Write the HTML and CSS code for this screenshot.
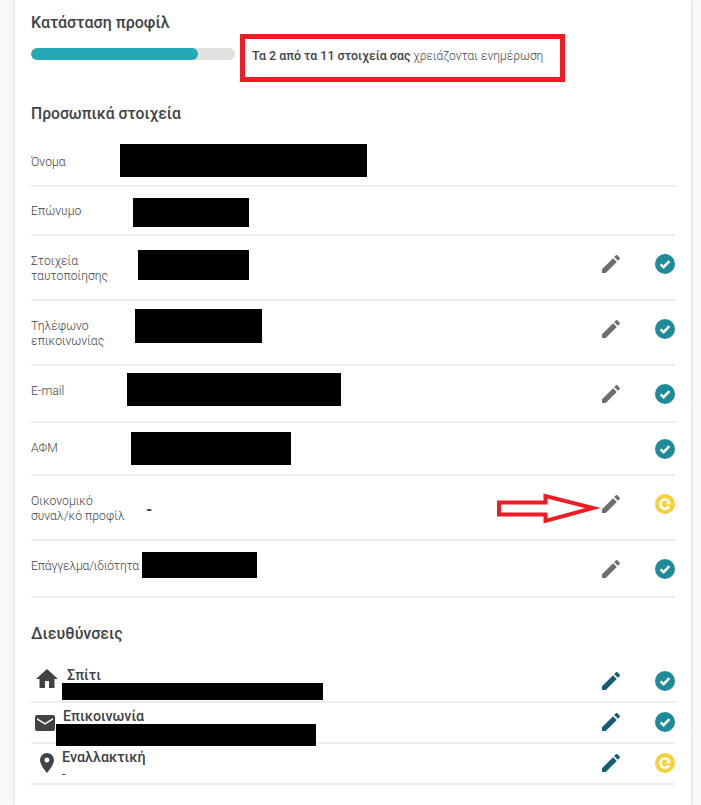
FILE: index.html
```html
<!DOCTYPE html>
<html lang="el">
<head>
<meta charset="utf-8">
<title>Κατάσταση προφίλ</title>
<link rel="stylesheet" href="styles.css">
</head>
<body>
<svg class="defs" width="0" height="0" aria-hidden="true">
  <defs>
    <symbol id="pencil" viewBox="0 0 24 24"><path d="M3 17.25V21h3.75L17.81 9.94l-3.75-3.75L3 17.25zM20.71 7.04a1 1 0 0 0 0-1.41l-2.34-2.34a1 1 0 0 0-1.41 0l-1.83 1.83 3.75 3.75 1.83-1.83z"/></symbol>
    <symbol id="ok" viewBox="0 0 20 20"><circle cx="10" cy="10" r="10" fill="#1e8b9b"/><path d="M5.6 10.3l3 2.900 5.800-6" fill="none" stroke="#fff" stroke-width="2.5"/></symbol>
    <symbol id="pending" viewBox="0 0 20 20"><circle cx="10" cy="10" r="10" fill="#f5d03f"/><path d="M14 12.300a4.600 4.600 0 1 1-.3-4.800" fill="none" stroke="#fff" stroke-width="2.600"/><path d="M9.500 10.300h5.800V6.800z" fill="#fff"/></symbol>
  </defs>
</svg>
<main class="card">
  <h2 class="heading">Κατάσταση προφίλ</h2>
  <div class="progress-row">
    <div class="bar"><div class="bar-fill"></div></div>
    <div class="notice"><b>Τα 2 από τα 11 στοιχεία σας</b> χρειάζονται ενημέρωση</div>
  </div>

  <h2 class="heading personal-heading">Προσωπικά στοιχεία</h2>
  <section class="rows">
    <div class="row row-first">
      <div class="label">Όνομα</div>
      <div class="redact redact-name"></div>
    </div>
    <div class="row row-surname">
      <div class="label">Επώνυμο</div>
      <div class="redact redact-surname"></div>
    </div>
    <div class="row row-tall">
      <div class="label">Στοιχεία<br>ταυτοποίησης</div>
      <div class="redact redact-id"></div>
      <div class="actions">
        <svg class="pencil"><use href="#pencil"/></svg>
        <svg class="status"><use href="#ok"/></svg>
      </div>
    </div>
    <div class="row row-tall">
      <div class="label">Τηλέφωνο<br>επικοινωνίας</div>
      <div class="redact redact-phone"></div>
      <div class="actions">
        <svg class="pencil"><use href="#pencil"/></svg>
        <svg class="status"><use href="#ok"/></svg>
      </div>
    </div>
    <div class="row row-mid">
      <div class="label">E-mail</div>
      <div class="redact redact-mail"></div>
      <div class="actions">
        <svg class="pencil"><use href="#pencil"/></svg>
        <svg class="status"><use href="#ok"/></svg>
      </div>
    </div>
    <div class="row row-afm">
      <div class="label">ΑΦΜ</div>
      <div class="redact redact-afm"></div>
      <div class="actions">
        <svg class="status"><use href="#ok"/></svg>
      </div>
    </div>
    <div class="row row-tall">
      <div class="label">Οικονομικό<br>συναλ/κό προφίλ</div>
      <div class="dash">-</div>
      <div class="actions">
        <svg class="pencil"><use href="#pencil"/></svg>
        <svg class="status"><use href="#pending"/></svg>
      </div>
      <svg class="arrow" viewBox="0 0 104 34" aria-hidden="true"><path d="M2 10.500h46.500V4L96 16 48.500 29v-6.500H2z" fill="#fff" stroke="#ee1c25" stroke-width="4"/></svg>
    </div>
    <div class="row row-mid">
      <div class="label label-job">Επάγγελμα/ιδιότητα</div>
      <div class="redact redact-job"></div>
      <div class="actions">
        <svg class="pencil"><use href="#pencil"/></svg>
        <svg class="status"><use href="#ok"/></svg>
      </div>
    </div>
  </section>

  <h2 class="heading address-heading">Διευθύνσεις</h2>
  <section class="addresses">
    <div class="address address-home">
      <svg class="addr-icon icon-home" viewBox="0 0 24 24"><path d="M10 21v-7h4v7h5.500v-9H23L12 2 1 12h3.500v9z"/></svg>
      <div class="addr-text">
        <div class="addr-title">Σπίτι</div>
        <div class="redact redact-addr1"></div>
      </div>
      <div class="actions">
        <svg class="pencil pencil-dark"><use href="#pencil"/></svg>
        <svg class="status"><use href="#ok"/></svg>
      </div>
    </div>
    <div class="address address-contact">
      <svg class="addr-icon icon-mail" viewBox="0 0 20 16"><path d="M2 0h16a2 2 0 0 1 2 2v12a2 2 0 0 1-2 2H2a2 2 0 0 1-2-2V2a2 2 0 0 1 2-2zm0 3v1.800l8 5 8-5V3l-8 5z" fill-rule="evenodd"/></svg>
      <div class="addr-text">
        <div class="addr-title">Επικοινωνία</div>
        <div class="redact redact-addr2"></div>
      </div>
      <div class="actions">
        <svg class="pencil pencil-dark"><use href="#pencil"/></svg>
        <svg class="status"><use href="#ok"/></svg>
      </div>
    </div>
    <div class="address address-alt">
      <svg class="addr-icon icon-pin" viewBox="0 0 14 20"><path d="M7 0a7 7 0 0 0-7 7c0 5.200 7 13 7 13s7-7.800 7-13a7 7 0 0 0-7-7zm0 9.500a2.500 2.500 0 1 1 0-5 2.500 2.500 0 0 1 0 5z"/></svg>
      <div class="addr-text">
        <div class="addr-title">Εναλλακτική</div>
        <div class="addr-dash">-</div>
      </div>
      <div class="actions">
        <svg class="pencil pencil-dark"><use href="#pencil"/></svg>
        <svg class="status"><use href="#pending"/></svg>
      </div>
    </div>
  </section>
</main>
</body>
</html>
```

FILE: styles.css
```css
* { box-sizing: border-box; }
html, body { margin: 0; height: 100%; overflow: hidden; }
body {
  background: #f8f8f6;
  color: #444;
  font-family: Roboto, "Noto Sans", sans-serif;
}
.defs { position: absolute; }
.card {
  width: 676px;
  height: 805px;
  margin-left: 15px;
  padding: 12px 16px 0;
  background: #fff;
  box-shadow: 0 0 4px rgba(0, 0, 0, .16);
}
.heading {
  margin: 0;
  font-size: 16px;
  line-height: 22px;
  font-weight: 500;
  color: #3f4346;
}
.progress-row {
  display: flex;
  align-items: flex-start;
  height: 48px;
}
.bar {
  width: 204px;
  height: 12px;
  margin-top: 14px;
  border-radius: 6px;
  background: #e1e1df;
  overflow: hidden;
}
.bar-fill {
  width: 167px;
  height: 12px;
  border-radius: 6px;
  background: #25a8b5;
}
.notice {
  width: 325px;
  height: 48px;
  margin-left: 5px;
  padding: 9px 0 0 7px;
  border: 5px solid #ee1c25;
  font-size: 12.05px;
  line-height: 16px;
  font-weight: 300;
  color: #3f4346;
  white-space: nowrap;
}
.notice b { font-size: 12.4px; font-weight: 500; }
.personal-heading { margin-top: 21px; font-size: 15.7px; }
.rows { margin-top: 12px; }
.row {
  position: relative;
  display: flex;
  align-items: flex-start;
  border-bottom: 2px solid #e9eeee;
}
.row-first { height: 50px; }
.row-surname { height: 49px; }
.row-tall { height: 65px; }
.row-mid { height: 57px; }
.row-afm { height: 53px; }
.label {
  flex: none;
  width: 80px;
  align-self: center;
  font-size: 12.2px;
  line-height: 15px;
  font-weight: 300;
  color: #3f4346;
  white-space: nowrap;
}
.label-job { letter-spacing: -.2px; }
.row-first .label, .row-surname .label, .row-tall .label { margin-top: 2px; }
.row-mid .label { margin-bottom: 5px; }
.row-afm .label { margin-bottom: 1px; }
.redact { background: #000; }
.redact-name { width: 247px; height: 33px; margin: 7px 0 0 9px; }
.redact-surname { width: 116px; height: 29px; margin: 11px 0 0 22px; }
.redact-id { width: 111px; height: 30px; margin: 14px 0 0 27px; }
.redact-phone { width: 127px; height: 34px; margin: 8px 0 0 24px; }
.redact-mail { width: 214px; height: 33px; margin: 7px 0 0 16px; }
.redact-afm { width: 160px; height: 33px; margin: 9px 0 0 20px; }
.redact-job { width: 115px; height: 26px; margin: 11px 0 0 31px; }
.dash {
  margin: 24px 0 0 35px;
  font-size: 16px;
  line-height: 20px;
  font-weight: 700;
}
.actions {
  display: flex;
  align-items: center;
  margin: 18px 0 0 auto;
}
.row-afm .actions { margin-top: 16px; }
.pencil {
  width: 24px;
  height: 24px;
  margin: -2px 32px -2px 0;
  fill: #6e6e6c;
}
.pencil-dark { fill: #155f75; }
.status { width: 20px; height: 20px; }
.arrow {
  position: absolute;
  left: 466px;
  top: 16px;
  width: 104px;
  height: 34px;
}
.address-heading { margin-top: 25px; }
.addresses { margin-top: 16px; }
.address {
  display: flex;
  align-items: flex-start;
  height: 41px;
  border-bottom: 2px solid #e9eeee;
}
.address-home { height: 42px; }
.addr-icon { flex: none; fill: #3f4346; }
.addr-text { flex: none; position: relative; }
.addr-title {
  font-size: 14.3px;
  line-height: 16px;
  font-weight: 500;
  color: #3f4346;
}
.address-home .addr-text { margin: 6px 0 0 3px; }
.address-home .addr-title { padding-left: 5px; }
.address-contact .addr-text { margin: 5px 0 0 1px; }
.address-contact .addr-title { padding-left: 7px; }
.address-alt .addr-text { margin: 5px 0 0 8px; }
.icon-home { width: 24px; height: 24px; margin: 6px 0 0 4px; }
.icon-mail { width: 20px; height: 16px; margin: 12px 0 0 4px; }
.icon-pin { width: 14px; height: 20px; margin: 9px 0 0 9px; }
.redact-addr1 { width: 261px; height: 17px; margin-top: 0; }
.redact-addr2 { position: relative; width: 260px; height: 22px; }
.addr-dash { font-size: 13px; line-height: 18px; color: #3f4346; }
.address .actions { margin-top: 10px; }
.address-contact .actions, .address-alt .actions { margin-top: 9px; }
```
